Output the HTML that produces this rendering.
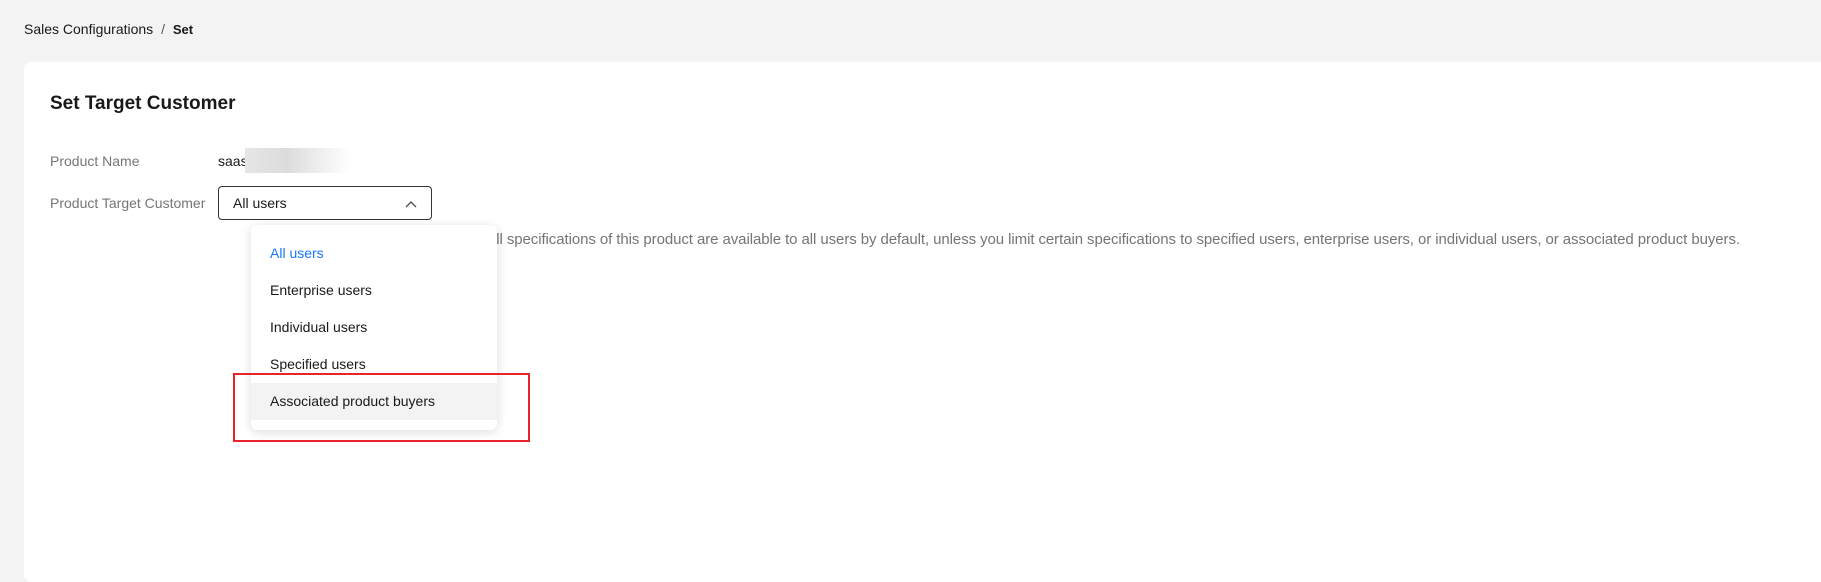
<!DOCTYPE html>
<html><head><meta charset="utf-8"><style>
*{margin:0;padding:0;box-sizing:border-box}
body{width:1821px;height:558px;background:#f3f3f3;font-family:"Liberation Sans",Arial,sans-serif;position:relative;overflow:hidden;color:#191919}
.abs{position:absolute;white-space:nowrap}
.card{position:absolute;left:24px;top:62px;width:1820px;height:520px;background:#fff;border-radius:8px}
.lbl{color:#757575;font-size:14px}
</style></head><body>
<div class="abs" style="left:24px;top:21px;font-size:14px;color:#191919">Sales Configurations <span style="color:#555;margin:0 4px">/</span> <b style="font-size:13px">Set</b></div>
<div class="card"></div>
<div class="abs" style="left:50px;top:93px;font-size:19px;font-weight:bold">Set Target Customer</div>
<div class="abs lbl" style="left:50px;top:153px">Product Name</div>
<div class="abs" style="left:218px;top:153px;font-size:14px">saas</div>
<div class="abs" style="left:245px;top:148px;width:105px;height:25px;background:linear-gradient(90deg,#e6e6e6,#dcdcdc 40%,#fff)"></div>
<div class="abs lbl" style="left:50px;top:195px">Product Target Customer</div>
<div class="abs" style="left:218px;top:186px;width:214px;height:34px;border:1px solid #333;border-radius:4px;font-size:14px;padding:8px 0 0 14px">All users
<svg style="position:absolute;left:185px;top:12px" width="14" height="10" viewBox="0 0 14 10"><path d="M2 8L7 3L12 8" fill="none" stroke="#555" stroke-width="1.4"/></svg></div>
<div class="abs" style="left:488px;top:231px;font-size:15px;letter-spacing:-0.08px;color:#757575">all specifications of this product are available to all users by default, unless you limit certain specifications to specified users, enterprise users, or individual users, or associated product buyers.</div>
<div class="abs" style="left:251px;top:225px;width:246px;height:205px;background:#fff;border-radius:6px;box-shadow:0 2px 10px rgba(0,0,0,.14);font-size:14px">
<div class="abs" style="left:19px;top:20px;color:#1476ff">All users</div>
<div class="abs" style="left:19px;top:57px">Enterprise users</div>
<div class="abs" style="left:19px;top:94px">Individual users</div>
<div class="abs" style="left:19px;top:131px">Specified users</div>
<div class="abs" style="left:0;top:158px;width:246px;height:37px;background:#f3f3f3"></div>
<div class="abs" style="left:19px;top:168px">Associated product buyers</div>
</div>
<div class="abs" style="left:233px;top:373px;width:297px;height:69px;border:2px solid #e8242a"></div>
</body></html>
